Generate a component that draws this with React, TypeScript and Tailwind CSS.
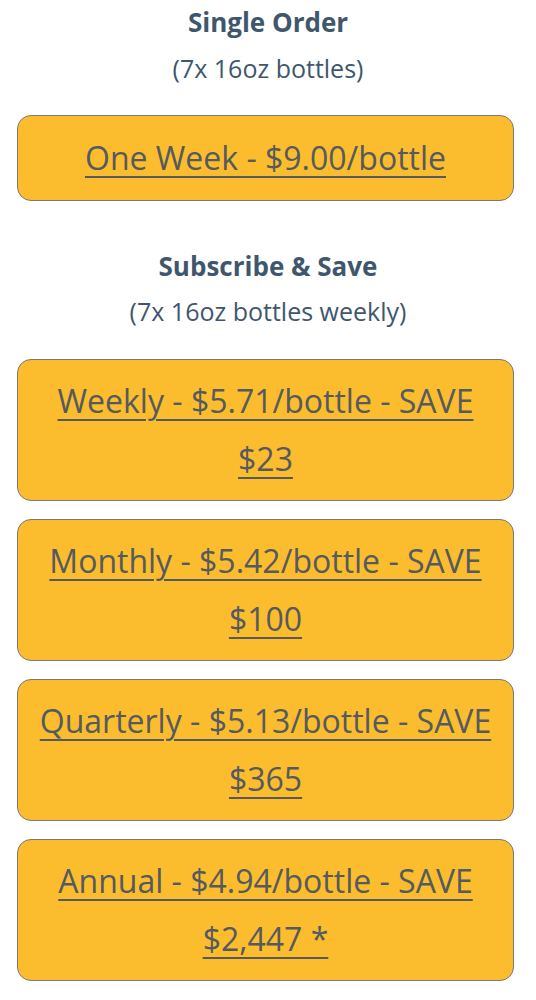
import React from "react";

const plans = [
  ["Weekly - $5.71/bottle - SAVE", "$23"],
  ["Monthly - $5.42/bottle - SAVE", "$100"],
  ["Quarterly - $5.13/bottle - SAVE", "$365"],
  ["Annual - $4.94/bottle - SAVE", "$2,447 *"],
];

export default function App() {
  return (
    <div className="w-[536px] bg-white font-['Open_Sans',sans-serif] text-center">
      <div className="pt-[4px]">
        <h2 className="text-[26px] leading-[36px] font-bold text-[#3e576d]">Single Order</h2>
        <p className="mt-[11px] text-[25px] leading-[34px] text-[#3e576d]">(7x 16oz bottles)</p>
      </div>
      <div className="pl-[17px] pr-[22px] mt-[30px]">
        <a href="#" className="flex items-center justify-center h-[86px] rounded-[14px] border border-[#7a7a7a] bg-[#fbbd2d] text-[32px] text-[#545a5f] underline underline-offset-[6px] decoration-[1.5px]">
          One Week - $9.00/bottle
        </a>
      </div>
      <div className="mt-[47px]">
        <h2 className="text-[26px] leading-[36px] font-bold text-[#3e576d]">Subscribe &amp; Save</h2>
        <p className="mt-[10px] text-[25px] leading-[34px] text-[#3e576d]">(7x 16oz bottles weekly)</p>
      </div>
      <div className="pl-[17px] pr-[22px] mt-[31px] flex flex-col gap-[18px]">
        {plans.map(([a, b]) => (
          <a key={a} href="#" className="flex items-center justify-center h-[142px] rounded-[14px] border border-[#7a7a7a] bg-[#fbbd2d] text-[32px] leading-[58px] text-[#545a5f] underline underline-offset-[6px] decoration-[1.5px]">
            <span>
              {a}
              <br />
              {b}
            </span>
          </a>
        ))}
      </div>
    </div>
  );
}
